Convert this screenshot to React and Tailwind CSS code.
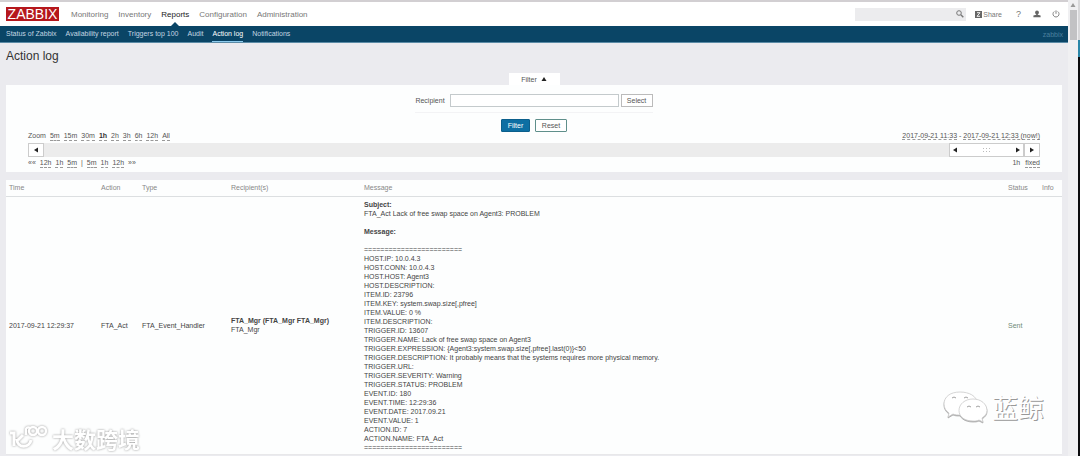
import React, { useState } from 'react'

const menu = ['Monitoring', 'Inventory', 'Reports', 'Configuration', 'Administration']
const submenu = ['Status of Zabbix', 'Availability report', 'Triggers top 100', 'Audit', 'Action log', 'Notifications']
const zoomLevels = ['5m', '15m', '30m', '1h', '2h', '3h', '6h', '12h', 'All']

const message = `========================
HOST.IP: 10.0.4.3
HOST.CONN: 10.0.4.3
HOST.HOST: Agent3
HOST.DESCRIPTION:
ITEM.ID: 23796
ITEM.KEY: system.swap.size[,pfree]
ITEM.VALUE: 0 %
ITEM.DESCRIPTION:
TRIGGER.ID: 13607
TRIGGER.NAME: Lack of free swap space on Agent3
TRIGGER.EXPRESSION: {Agent3:system.swap.size[,pfree].last(0)}<50
TRIGGER.DESCRIPTION: It probably means that the systems requires more physical memory.
TRIGGER.URL:
TRIGGER.SEVERITY: Warning
TRIGGER.STATUS: PROBLEM
EVENT.ID: 180
EVENT.TIME: 12:29:36
EVENT.DATE: 2017.09.21
EVENT.VALUE: 1
ACTION.ID: 7
ACTION.NAME: FTA_Act
========================`

function Arrow({ dir, className = 'text-[#222]' }) {
  const points = {
    up: '0.5,5 5.5,5 3,1',
    left: '5,0.5 5,5.5 1,3',
    right: '1,0.5 1,5.5 5,3',
  }
  return (
    <svg viewBox="0 0 6 6" className={`w-1.5 h-1.5 ${className}`} fill="currentColor">
      <polygon points={points[dir]} />
    </svg>
  )
}

function DottedLink({ children, active }) {
  return (
    <a href="#" className={`border-b border-dashed border-[#999] ${active ? 'font-bold text-[#333]' : ''}`}>
      {children}
    </a>
  )
}

function Header() {
  return (
    <header>
      <div className="h-[26px] bg-white border-t-2 border-[#d2cfd2] flex items-center pl-1.5 pr-2 text-[8px] text-[#777]">
        <a href="#" className="bg-[#b5171c] text-white text-[14px] leading-[14px] w-[53px] h-3.5 flex items-center justify-center">
          ZABBIX
        </a>
        <nav className="flex self-stretch ml-3 gap-2.5">
          {menu.map(item => (
            <a key={item} href="#" className={`relative flex items-center ${item === 'Reports' ? 'text-[#222]' : ''}`}>
              {item}
              {item === 'Reports' && (
                <svg viewBox="0 0 8 4" className="absolute bottom-0 left-1/2 -translate-x-1/2 w-2 h-1" fill="#0a4566">
                  <polygon points="0,4 4,0 8,4" />
                </svg>
              )}
            </a>
          ))}
        </nav>
        <div className="ml-auto flex items-center">
          <label className="flex items-center w-[111px] h-[13px] bg-[#ececee] pr-0.5">
            <input type="text" aria-label="Search" className="flex-1 min-w-0 h-full px-1 outline-none" />
            <svg viewBox="0 0 8 8" className="w-2 h-2" fill="none" stroke="#777" strokeWidth="1">
              <circle cx="3" cy="3" r="2.3" />
              <path d="M4.8 4.8 7.3 7.3" strokeWidth="1.4" />
            </svg>
          </label>
          <a href="#" className="ml-[9px] flex items-center gap-px text-[7px]">
            <svg viewBox="0 0 7 7" className="w-[7px] h-[7px]">
              <rect width="7" height="7" fill="#666" />
              <path d="M2 1.7h3L2 5.3h3" fill="none" stroke="#fff" strokeWidth="0.9" />
            </svg>
            Share
          </a>
          <a href="#" className="ml-3.5 text-[9px]">?</a>
          <a href="#" aria-label="Profile" className="ml-3">
            <svg viewBox="0 0 8 8" className="w-2 h-2" fill="#666">
              <circle cx="4" cy="2.4" r="1.9" />
              <path d="M3.2 3.8h1.6v1L7.600 5.600v1.600H.4V5.600l2.800-.8z" />
            </svg>
          </a>
          <a href="#" aria-label="Sign out" className="ml-[11px]">
            <svg viewBox="0 0 8 8" className="w-2 h-2" fill="none" stroke="#777" strokeWidth="0.9">
              <path d="M4 .4v3.4M2.300 1.500a3 3 0 1 0 3.400 0" />
            </svg>
          </a>
        </div>
      </div>
      <nav className="h-[17px] bg-[#0a4566] border-b border-[#5b8ba6] flex items-stretch pl-1.5 pr-[5px] gap-[9px] text-[7px] text-[#c3d6e2]">
        {submenu.map(item => (
          <a
            key={item}
            href="#"
            className={`flex items-center border-b ${item === 'Action log' ? 'text-white border-[#8ccbee]' : 'border-transparent'}`}
          >
            {item}
          </a>
        ))}
        <span className="ml-auto flex items-center text-[#4a809f]">zabbix</span>
      </nav>
    </header>
  )
}

function TimeBar() {
  return (
    <div className="px-[22px]">
      <div className="flex justify-between leading-[8px]">
        <div className="flex gap-1">
          <span>Zoom</span>
          {zoomLevels.map(z => <DottedLink key={z} active={z === '1h'}>{z}</DottedLink>)}
        </div>
        <div>
          <DottedLink>2017-09-21 11:33</DottedLink> - <DottedLink>2017-09-21 12:33 (now!)</DottedLink>
        </div>
      </div>
      <div className="mt-0.5 flex h-3.5 bg-[#ececec]">
        <button aria-label="Back" className="w-4 bg-white border border-[#ccc] flex items-center justify-center">
          <Arrow dir="left" />
        </button>
        <div className="ml-auto w-[75px] bg-white border border-[#ccc] flex items-center justify-between px-0.5">
          <Arrow dir="left" />
          <svg viewBox="0 0 7 4" className="w-[7px] h-1" fill="#bbb">
            <path d="M0 0h1v1H0zM3 0h1v1H3zM6 0h1v1H6zM0 3h1v1H0zM3 3h1v1H3zM6 3h1v1H6z" />
          </svg>
          <Arrow dir="right" />
        </div>
        <button aria-label="Forward" className="w-4 bg-white border border-[#ccc] flex items-center justify-center">
          <Arrow dir="right" />
        </button>
      </div>
      <div className="mt-0.5 flex justify-between leading-[8px]">
        <div className="flex gap-1">
          <a href="#">««</a>
          <DottedLink>12h</DottedLink>
          <DottedLink>1h</DottedLink>
          <DottedLink>5m</DottedLink>
          <span>|</span>
          <DottedLink>5m</DottedLink>
          <DottedLink>1h</DottedLink>
          <DottedLink>12h</DottedLink>
          <a href="#">»»</a>
        </div>
        <div className="flex gap-[5px]">
          <span>1h</span>
          <DottedLink>fixed</DottedLink>
        </div>
      </div>
    </div>
  )
}

function Filter() {
  const [recipient, setRecipient] = useState('')

  return (
    <section className="text-[#555]">
      <div className="flex justify-center">
        <button className="w-[51px] h-3 bg-white flex items-center justify-center gap-1">
          Filter <Arrow dir="up" />
        </button>
      </div>
      <form className="bg-[#fdfefe] pt-[9px] pb-1" onSubmit={e => e.preventDefault()}>
        <div className="flex justify-center">
          <div className="flex items-center pb-[5px] border-b border-[#f3f3f5]">
            <label htmlFor="recipient" className="mr-[5px]">Recipient</label>
            <input
              id="recipient"
              type="text"
              value={recipient}
              onChange={e => setRecipient(e.target.value)}
              className="w-[169px] h-[13px] bg-white border border-[#c4cacc] px-1 outline-none"
            />
            <button type="button" className="ml-0.5 w-8 h-[13px] bg-white border border-[#bbb] flex items-center justify-center">Select</button>
          </div>
        </div>
        <div className="flex justify-center gap-[5px] mt-1.5">
          <button type="submit" className="w-[29px] h-[13px] bg-[#0d6fa3] border border-[#0b5f8c] rounded-[1px] text-white">Filter</button>
          <button type="reset" className="w-8 h-[13px] bg-white border border-[#5f8f8b] rounded-[1px]">Reset</button>
        </div>
        <TimeBar />
      </form>
    </section>
  )
}

function LogTable() {
  return (
    <table className="mt-2 w-full table-fixed bg-[#fdfefe] text-left text-[#444] border-b border-[#e8e8ea]">
      <thead>
        <tr className="h-4 text-[#888] border-b border-[#dcdfe1] [&>th]:font-normal [&>th]:pl-[3px]">
          <th className="w-[92px]">Time</th>
          <th className="w-[41px]">Action</th>
          <th className="w-[89px]">Type</th>
          <th className="w-[133px]">Recipient(s)</th>
          <th>Message</th>
          <th className="w-[34px]">Status</th>
          <th className="w-[23px]">Info</th>
        </tr>
      </thead>
      <tbody>
        <tr className="[&>td]:pl-[3px]">
          <td>2017-09-21 12:29:37</td>
          <td>FTA_Act</td>
          <td>FTA_Event_Handler</td>
          <td><b>FTA_Mgr (FTA_Mgr FTA_Mgr)</b><br />FTA_Mgr</td>
          <td className="pt-[3px] pb-0.5">
            <b>Subject:</b><br />
            FTA_Act Lack of free swap space on Agent3: PROBLEM<br /><br />
            <b>Message:</b><br /><br />
            <div className="whitespace-pre-line">{message}</div>
          </td>
          <td className="text-[#6f8a78]">Sent</td>
          <td></td>
        </tr>
      </tbody>
    </table>
  )
}

// Window scrollbar with the dark desktop edge beside it
function Scrollbar() {
  return (
    <div className="flex w-3 shrink-0">
      <div className="w-2.5 bg-[#f0f0f2] pt-0.5 flex flex-col items-center">
        <Arrow dir="up" className="text-[#999]" />
        <div className="mt-0.5 w-[7px] h-[30px] bg-[#c2c2c4]" />
      </div>
      <div className="w-0.5 flex flex-col">
        <div className="h-10 bg-[#d8d8da]" />
        <div className="h-[17px] bg-[#2b87a8]" />
        <div className="flex-1 bg-[#0b0b0d]" />
      </div>
    </div>
  )
}

function Watermarks() {
  return (
    <>
      <div className="absolute left-2 bottom-1 flex items-center gap-1 text-white [filter:drop-shadow(0_0_1px_#999)]">
        <svg viewBox="0 0 40 28" className="w-10 h-7" fill="none" stroke="currentColor" strokeWidth="3">
          <path d="M2 9h4v13M10 16l5-5M9 15c0 10 13 9 14 1" />
          <path d="M18 11V5c1-2 3-2 4-1" strokeWidth="2.4" />
          <circle cx="25" cy="7" r="4" strokeWidth="2.400" />
          <circle cx="34" cy="7" r="4" strokeWidth="2.400" />
        </svg>
        <span className="text-[22px] leading-7 font-bold font-['Noto_Sans_CJK_SC',sans-serif]">大数跨境</span>
      </div>
      <div className="absolute right-9 bottom-8 flex items-center gap-1 text-white">
        <svg viewBox="0 0 46 34" className="w-[46px] h-[34px] [filter:drop-shadow(0_1px_0_#aaa)]" fill="#fff" stroke="#ccc" strokeWidth="0.8">
          <path d="M18 2C8 2 2 7 2 14c0 4 2 7 5 9l-1 4 5-3c2 1 5 1 8 1 9 0 16-5 16-12S27 2 18 2z" />
          <path d="M31 9c-8 0-14 5-14 11.500S23 31 31 31c2 0 4 0 6-1l4 2-1-4c3-2 5-4 5-7.500C45 14 39 9 31 9z" />
          <path d="M10 8q2-2 4 0M22 8q2-2 4 0M25 17q2-2 4 0M34 17q2-2 4 0" fill="none" stroke="#888" />
        </svg>
        <span className="text-[26px] leading-8 font-['Noto_Sans_CJK_SC',sans-serif] [text-shadow:1px_1px_0_#999]">蓝鲸</span>
      </div>
    </>
  )
}

export default function App() {
  return (
    <div className="relative flex min-h-screen bg-[#ebebef] font-['Liberation_Sans',sans-serif] text-[7px] leading-[9px]">
      <div className="flex-1 min-w-0">
        <Header />
        <main className="px-1.5">
          <h1 className="pt-[5px] text-[12px] leading-4 h-[30px] text-[#333]">Action log</h1>
          <Filter />
          <LogTable />
        </main>
      </div>
      <Scrollbar />
      <Watermarks />
    </div>
  )
}
